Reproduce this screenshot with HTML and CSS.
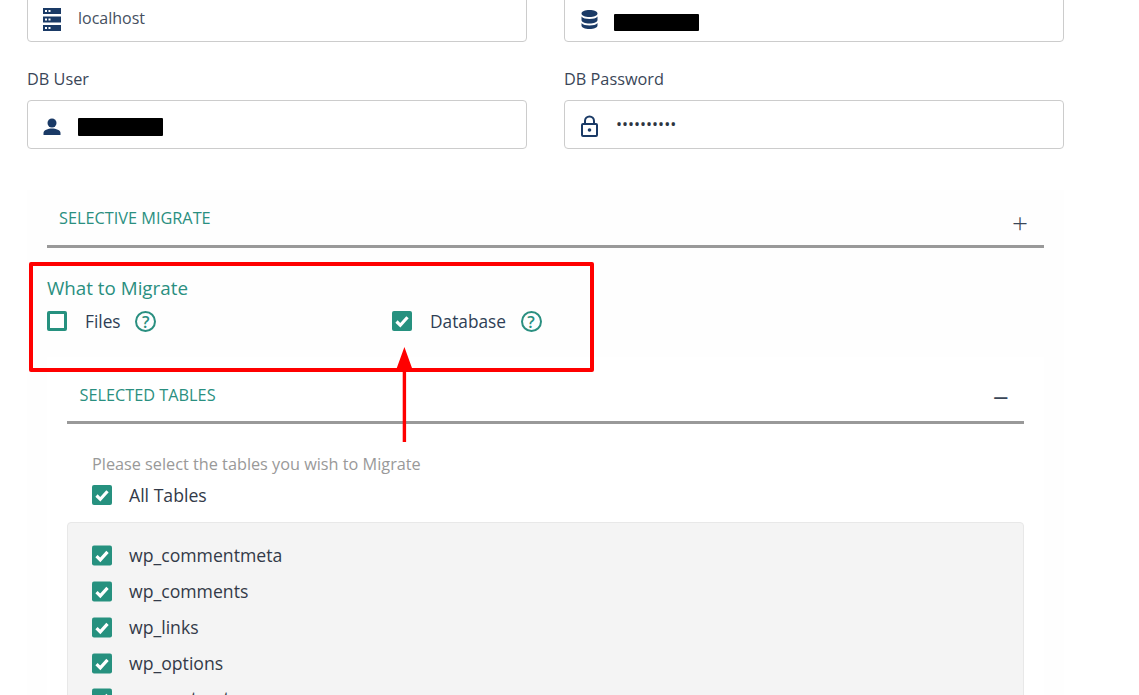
FILE: index.html
```html
<!DOCTYPE html>
<html lang="en">
<head>
<meta charset="utf-8">
<title>Selective Migrate</title>
<link rel="stylesheet" href="styles.css">
</head>
<body>
<main class="page">
  <div class="field-grid">
    <div class="field">
      <div class="input">
        <svg class="field-icon icon-server" viewBox="0 0 20 24"><path fill="#1a3a66" d="M1 0h18v6H1zM1 8.500h18v6H1zM1 17h18v6H1z"/><path fill="#fff" d="M3 2h2v2H3zM6.500 2h2v2h-2zM3 10.500h2v2H3zM6.500 10.500h2v2h-2zM3 19h2v2H3zM6.500 19h2v2h-2z"/></svg>
        <span class="value">localhost</span>
      </div>
    </div>
    <div class="field">
      <div class="input">
        <svg class="field-icon icon-db" viewBox="0 0 20 24"><path fill="#1a3a66" d="M10.500 1c4.500 0 8 1.400 8 3.500S15 8 10.500 8s-8-1.400-8-3.500S6 1 10.500 1zM2.500 7.500C4 9.300 7 10 10.500 10s6.500-.7 8-2.500V11c0 2-3.500 3.500-8 3.500s-8-1.500-8-3.500zM2.500 14c1.500 1.800 4.500 2.500 8 2.500s6.500-.7 8-2.500v2.500c0 2-3.500 3.500-8 3.500s-8-1.500-8-3.500z"/></svg>
        <span class="redact redact-db"></span>
      </div>
    </div>
    <div class="field">
      <label class="field-label">DB User</label>
      <div class="input">
        <svg class="field-icon icon-low" viewBox="0 0 20 24"><circle fill="#1a3a66" cx="10" cy="9" r="4.500"/><path fill="#1a3a66" d="M1.500 21v-2c0-3 4.500-4.500 8.500-4.500s8.500 1.500 8.500 4.500v2z"/></svg>
        <span class="redact redact-user"></span>
      </div>
    </div>
    <div class="field">
      <label class="field-label">DB Password</label>
      <div class="input">
        <svg class="field-icon icon-low" viewBox="0 0 20 24"><path fill="none" stroke="#1a3a66" stroke-width="2" d="M4 10h13a1 1 0 0 1 1 1v10a1 1 0 0 1-1 1H4a1 1 0 0 1-1-1V11a1 1 0 0 1 1-1zM6 10V7a4.500 4.500 0 0 1 9 0v3"/><circle fill="#1a3a66" cx="10.500" cy="16" r="1.800"/></svg>
        <span class="dots">••••••••••</span>
      </div>
    </div>
  </div>

  <section class="section">
    <header class="section-head">
      <h2 class="section-title">SELECTIVE MIGRATE</h2>
      <span class="toggle toggle-plus">+</span>
    </header>
    <div class="section-body">
      <h3 class="what">What to Migrate</h3>
      <div class="what-row">
        <div class="what-item">
          <span class="check check-off"></span>
          <span class="what-label">Files</span>
          <span class="help">?</span>
        </div>
        <div class="what-item">
          <span class="check"><svg viewBox="0 0 20 20"><path fill="none" stroke="#fff" stroke-width="3.200" d="M4.500 10.500l3.800 3.800 7.200-8"/></svg></span>
          <span class="what-label">Database</span>
          <span class="help">?</span>
        </div>
      </div>
    </div>
    <section class="subsection">
      <header class="section-head sub-head">
        <h2 class="section-title">SELECTED TABLES</h2>
        <span class="toggle">−</span>
      </header>
      <p class="hint">Please select the tables you wish to Migrate</p>
      <div class="row row-all"><span class="check"><svg viewBox="0 0 20 20"><path fill="none" stroke="#fff" stroke-width="3.200" d="M4.500 10.500l3.800 3.800 7.200-8"/></svg></span><span>All Tables</span></div>
      <div class="table-list">
        <div class="row"><span class="check"><svg viewBox="0 0 20 20"><path fill="none" stroke="#fff" stroke-width="3.200" d="M4.500 10.500l3.800 3.800 7.200-8"/></svg></span><span>wp_commentmeta</span></div>
        <div class="row"><span class="check"><svg viewBox="0 0 20 20"><path fill="none" stroke="#fff" stroke-width="3.200" d="M4.500 10.500l3.800 3.800 7.200-8"/></svg></span><span>wp_comments</span></div>
        <div class="row"><span class="check"><svg viewBox="0 0 20 20"><path fill="none" stroke="#fff" stroke-width="3.200" d="M4.500 10.500l3.800 3.800 7.200-8"/></svg></span><span>wp_links</span></div>
        <div class="row"><span class="check"><svg viewBox="0 0 20 20"><path fill="none" stroke="#fff" stroke-width="3.200" d="M4.500 10.500l3.800 3.800 7.200-8"/></svg></span><span>wp_options</span></div>
        <div class="row"><span class="check"><svg viewBox="0 0 20 20"><path fill="none" stroke="#fff" stroke-width="3.200" d="M4.500 10.500l3.800 3.800 7.200-8"/></svg></span><span>wp_postmeta</span></div>
      </div>
    </section>
  </section>
</main>

<div class="callout"></div>
<svg class="arrow" viewBox="0 0 24 96"><path fill="#f00" d="M9.700 96V22h3.400v74zM11.400 1l7.600 21H3.800z"/></svg>
</body>
</html>
```
FILE: styles.css
```css
* { box-sizing: border-box; }
html, body { margin: 0; height: 695px; overflow: hidden; background: #fff; }
body { font-family: "Open Sans", sans-serif; color: #2f3e55; position: relative; }
.page { padding-left: 27px; width: 1064px; margin-top: -7px; height: 702px; overflow: hidden; }

.field-grid { display: grid; grid-template-columns: 500px 500px; column-gap: 37px; row-gap: 26px; }
.field-label { display: block; font-size: 16.300px; line-height: 22px; margin-bottom: 10px; color: #3a4657; }
.input { height: 49px; border: 1px solid #ccc; border-radius: 4px; display: flex; align-items: center; padding-left: 14px; background: #fff; }
.field-icon { width: 20px; height: 24px; flex: none; }
.icon-server { margin-top: 5px; }
.icon-db { margin-top: 6px; }
.icon-low { margin-top: 2px; }
.value { margin-left: 16px; font-size: 16px; color: #46505f; }
.redact { display: block; height: 18px; width: 85px; background: #000; border-radius: 1px; margin-left: 16px; }
.redact-db { margin-top: 9px; margin-left: 15px; height: 17px; }
.redact-user { margin-top: 4px; }
.dots { margin-left: 17px; font-size: 16px; color: #2c3440; margin-top: -2px; }

.section { margin-top: 41px; width: 1037px; padding-left: 20px; background: #fefefe; }
.section-head { height: 58px; width: 997px; border-bottom: 3px solid #999; display: flex; justify-content: space-between; padding-left: 12px; padding-right: 16px; }
.section-title { margin: 0; font-weight: 400; font-size: 16.300px; line-height: 20px; color: #2a8f80; padding-top: 18px; }
.toggle { font-size: 28px; line-height: 30px; padding-top: 17px; color: #3a4657; }
.toggle-plus { font-weight: 300; }

.section-body { padding-top: 28px; }
.what { margin: 0; font-weight: 400; font-size: 18.800px; line-height: 24px; color: #2a8f80; }
.what-row { display: flex; margin-top: 9px; }
.what-item { width: 345px; display: flex; align-items: center; height: 24px; font-size: 17.300px; }
.what-label { margin-left: 18px; color: #2f3e55; }
.help { margin-left: 14.600px; width: 21px; height: 21px; border: 2px solid #2a8f80; border-radius: 50%; color: #2a8f80; font-size: 16.500px; font-weight: 600; line-height: 17px; text-align: center; }
.check { width: 20px; height: 20px; flex: none; border-radius: 2px; background: #26917f; display: block; }
.check svg { display: block; width: 20px; height: 20px; }
.check-off { background: #fff; border: 3px solid #26917f; }

.subsection { margin-top: 24px; width: 997px; padding: 0 20px; background: #fff; }
.sub-head { height: 67px; width: 957px; padding-left: 12.500px; padding-right: 15px; }
.sub-head .section-title { padding-top: 28px; }
.sub-head .toggle { padding-top: 25px; }

.hint { margin: 29px 0 0 25px; font-size: 16.250px; line-height: 22px; color: #999; }
.row { display: flex; align-items: center; height: 35.800px; font-size: 17.650px; column-gap: 17px; padding-left: 25px; color: #333a48; }
.row-all { margin-top: 5px; height: 30px; }
.table-list { margin-top: 12px; background: #f4f4f4; border: 1px solid #e8e8e8; border-radius: 4px; padding: 14.400px 0 0 0; height: 200px; }
.table-list .row { padding-left: 24px; }
.table-list .check { transform: translateY(.6px); }

.callout { position: absolute; left: 29px; top: 262px; width: 565px; height: 110px; border: 4px solid #f00; border-radius: 2px; }
.arrow { position: absolute; left: 393px; top: 346px; width: 24px; height: 96px; }
```
